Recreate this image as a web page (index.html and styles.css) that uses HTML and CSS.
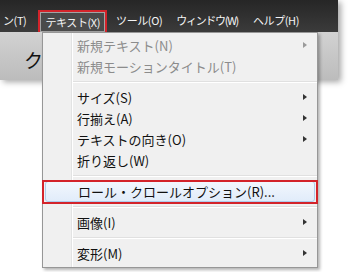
FILE: index.html
```html
<!DOCTYPE html>
<html lang="ja">
<head>
  <meta charset="UTF-8" />
  <title>テキストメニュー</title>
  <link rel="stylesheet" href="styles.css">
</head>
<body>
  <div class="frame">
    <nav class="menubar">
      <span class="menubar-item first">ン(T)</span>
      <span class="menubar-item active">テキスト(X)</span>
      <span class="menubar-item">ツール(O)</span>
      <span class="menubar-item narrow">ウィンドウ(W)</span>
      <span class="menubar-item">ヘルプ(H)</span>
    </nav>
    <div class="toolbar">
      <span class="toolbar-title">ク</span>
    </div>
  </div>

  <ul class="dropdown">
    <li class="item disabled sub">新規テキスト(N)</li>
    <li class="item disabled">新規モーションタイトル(T)</li>
    <li class="sep"></li>
    <li class="item sub">サイズ(S)</li>
    <li class="item sub">行揃え(A)</li>
    <li class="item sub">テキストの向き(O)</li>
    <li class="item">折り返し(W)</li>
    <li class="sep"></li>
    <li class="item hover">ロール・クロールオプション(R)...</li>
    <li class="sep"></li>
    <li class="item sub">画像(I)</li>
    <li class="sep"></li>
    <li class="item sub">変形(M)</li>
  </ul>
</body>
</html>
```

FILE: styles.css
```css
body {
  margin: 0;
  background: #fff;
  font-family: "Noto Sans CJK JP", "Noto Sans", sans-serif;
  position: relative;
  width: 348px;
  height: 272px;
  overflow: hidden;
}
.frame {
  width: 338px;
  box-shadow: 3px 2px 6px rgba(0,0,0,0.35);
}
.menubar {
  display: flex;
  align-items: flex-end;
  height: 32px;
  background: linear-gradient(#262626, #3b3b3b);
}
.menubar-item {
  box-sizing: border-box;
  height: 22px;
  line-height: 20px;
  padding: 0 6px;
  font-size: 11px;
  letter-spacing: -0.4px;
  color: #f4f4f4;
}
.menubar-item.first {
  padding: 0 12px 0 3px;
}
.menubar-item.narrow {
  letter-spacing: -1.3px;
  padding: 0 9px 0 8px;
}
.menubar-item.active {
  border: 2px solid #d3232a;
  border-bottom: 0;
  background: #4a4a4a;
  box-shadow: inset 0 0 0 1px #a3a3a3;
  padding: 0 5px;
  margin: 0 3px 0 0;
}
.toolbar {
  height: 48px;
  background: linear-gradient(#d2d2d2, #bcbcbc);
  padding-left: 24px;
}
.toolbar-title {
  display: block;
  padding-top: 16px;
  font-size: 19px;
  line-height: 24px;
  color: #111;
}
.dropdown {
  position: absolute;
  left: 42px;
  top: 32px;
  width: 274px;
  margin: 0;
  padding: 2px 0 3px;
  list-style: none;
  border: 1px solid #979797;
  background: linear-gradient(to right, transparent 28px, #e2e3e3 28px, #e2e3e3 29px, #fff 29px, #fff 30px, transparent 30px), #f0f0f0;
  box-shadow: 2px 2px 3px rgba(0,0,0,0.3);
}
.item {
  position: relative;
  height: 21px;
  line-height: 21px;
  padding-left: 34px;
  font-size: 13px;
  color: #111;
}
.item.disabled {
  color: #8c8c8c;
}
.item.sub::before {
  content: "";
  position: absolute;
  right: 10px;
  top: 7px;
  border-left: 4px solid #333;
  border-top: 3.5px solid transparent;
  border-bottom: 3.5px solid transparent;
}
.item.disabled.sub::before {
  border-left-color: #9a9a9a;
}
.item.hover {
  margin: 0 2px;
  padding-left: 32px;
  box-sizing: border-box;
  border: 1px solid #aeccec;
  border-radius: 3px;
  line-height: 19px;
  background: linear-gradient(#f2f7fd, #e1ecfa);
}
.item.hover::after {
  content: "";
  position: absolute;
  left: -4px;
  right: -4px;
  top: -2px;
  bottom: -3px;
  border: 2px solid #d3232a;
}
.sep {
  height: 10px;
  margin-left: 30px;
  background: linear-gradient(transparent 4px, #e0e0e0 4px, #e0e0e0 5px, #fff 5px, #fff 6px, transparent 6px);
}
```
